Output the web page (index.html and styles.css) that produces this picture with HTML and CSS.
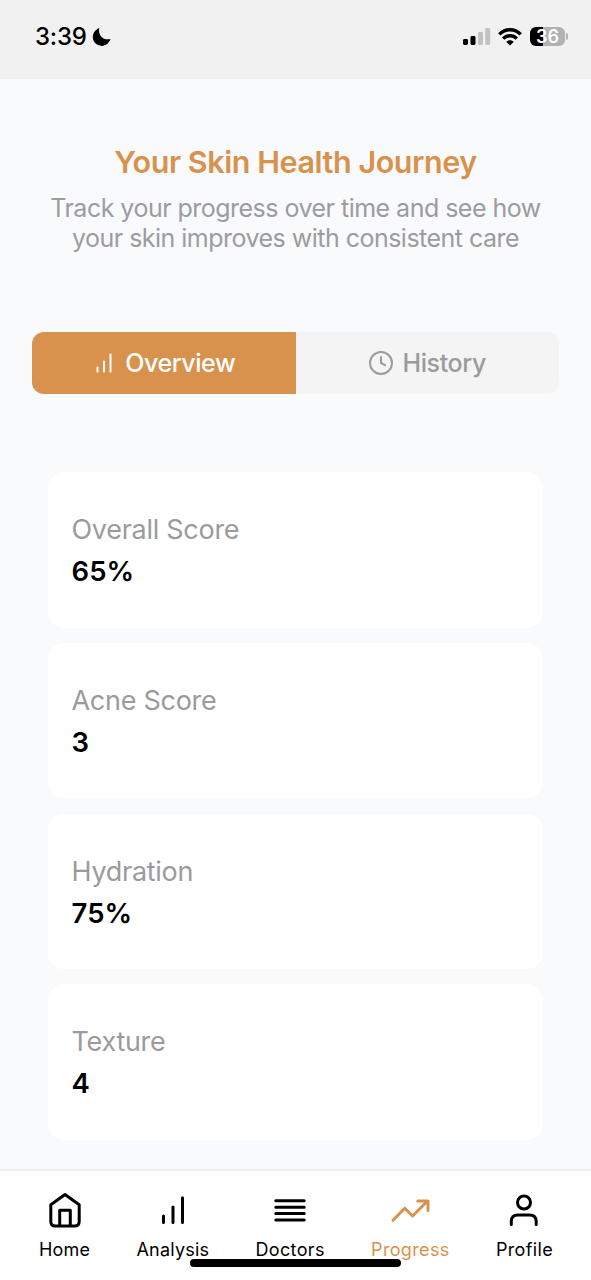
FILE: index.html
```html
<!DOCTYPE html>
<html lang="en">
<head>
<meta charset="utf-8">
<title>Your Skin Health Journey</title>
<link rel="stylesheet" href="styles.css">
</head>
<body>
<div class="app">
  <header class="status">
    <div class="clock"><span class="time">3:39</span>
      <svg width="20" height="20" viewBox="0 0 20 20"><path d="M7.300.9C5.700 6.700 10 13.800 18.600 12.100C16.900 16.300 13.800 18.900 9.800 18.900C4.700 18.900.8 14.900.8 10.100C.8 5.900 3.500 2.300 7.300.9Z" fill="#000"/></svg>
    </div>
    <div class="indicators">
      <svg class="signal" width="28" height="18" viewBox="0 0 28 18"><rect x="0" y="11" width="5" height="6" rx="1.400"/><rect x="7.500" y="8" width="5" height="9" rx="1.400"/><g fill="#c2c2c2"><rect x="15" y="4" width="5" height="13" rx="1.400"/><rect x="22.200" y="0" width="5" height="17" rx="1.400"/></g></svg>
      <svg class="wifi" width="24" height="18" viewBox="0 0 24 18"><g fill="none" stroke="#000" stroke-width="3.400"><path d="M1.300 6.400C7.300.2 16.700.2 22.700 6.400"/><path d="M5.200 10.600C9 6.800 15 6.800 18.800 10.600"/></g><path d="M8.200 13.700C10.300 11.600 13.700 11.600 15.800 13.700L12 17.500Z"/></svg>
      <div class="battery"><span class="level">36</span></div>
      <span class="cap"></span>
    </div>
  </header>
  <main class="content">
    <h1 class="title">Your Skin Health Journey</h1>
    <p class="intro">Track your progress over time and see how<br>your skin improves with consistent care</p>
    <div class="tabs">
      <button class="tab active"><svg width="18" height="22" viewBox="0 0 18 22" fill="none" stroke="currentColor" stroke-width="2" stroke-linecap="round"><path d="M2.500 15.500V19.500M9 9.500V19.500M15.500 2.500V19.500"/></svg><span>Overview</span></button>
      <button class="tab"><svg width="26" height="26" viewBox="0 0 26 26" fill="none" stroke="currentColor" stroke-width="2" stroke-linecap="round" stroke-linejoin="round"><circle cx="13" cy="13" r="11"/><path d="M13 7V13L17 15.200"/></svg><span>History</span></button>
    </div>
    <section class="cards">
      <article class="card"><div class="label">Overall Score</div><div class="value">65%</div></article>
      <article class="card"><div class="label">Acne Score</div><div class="value">3</div></article>
      <article class="card"><div class="label">Hydration</div><div class="value">75%</div></article>
      <article class="card"><div class="label">Texture</div><div class="value">4</div></article>
    </section>
  </main>
  <nav class="nav">
    <a class="item home"><svg viewBox="0 0 40 40"><path d="M20 4.500 34.200 14.700V31.500Q34.200 36 29.700 36H10.300Q5.800 36 5.800 31.500V14.700ZM14.700 36V20.300H25.300V36"/></svg><span>Home</span></a>
    <a class="item analysis"><svg viewBox="0 0 40 40"><path d="M10.500 26V32.500M20 17V32.500M29.500 7.700V32.500"/></svg><span>Analysis</span></a>
    <a class="item doctors"><svg viewBox="0 0 40 40"><path d="M5.800 10.800H34.200M5.800 17.200H34.200M5.800 23.500H34.200M5.800 29.900H34.200"/></svg><span>Doctors</span></a>
    <a class="item progress"><svg viewBox="0 0 40 40"><path d="M3 30.300 14.800 18.200 22.600 26 37.500 11M27.800 11H38V20.500"/></svg><span>Progress</span></a>
    <a class="item profile"><svg viewBox="0 0 40 40"><circle cx="20" cy="12.500" r="6.500"/><path d="M7.300 34.500V31.500Q7.300 24.900 13.900 24.900H25.500Q32.200 24.900 32.200 31.500V34.500"/></svg><span>Profile</span></a>
    <div class="home-bar"></div>
  </nav>
</div>
</body>
</html>
```
FILE: styles.css
```css
* { box-sizing: border-box; }
body { margin: 0; font-family: Inter, "Liberation Sans", sans-serif; color: #000; }
.app { display: flex; flex-direction: column; width: 591px; height: 1280px; background: #f9fafc; overflow: hidden; }
svg { display: block; flex-shrink: 0; }
.status { display: flex; justify-content: space-between; height: 79px; padding: 26px 23px 0 35px; background: #f1f1f1; }
.clock, .indicators { display: flex; height: 22px; align-items: center; }
.indicators { height: 21px; }
.clock { gap: 5px; }
.time { font-size: 24px; font-weight: 500; line-height: 22px; letter-spacing: -0.2px; }
.wifi { margin-left: 7px; }
.battery { display: flex; align-items: center; justify-content: center; width: 35px; height: 19px; margin-left: 8px; border-radius: 6px; background: linear-gradient(90deg, #000 37%, #b2b2b2 37%); color: #fff; }
.level { font-size: 18px; font-weight: 600; line-height: 19px; }
.cap { width: 2px; height: 7px; margin-left: 1px; border-radius: 0 3px 3px 0; background: #b2b2b2; }
.content { flex: 1; padding: 64px 32px 0; }
.title { margin: 0; color: #d8924e; font-size: 30.5px; font-weight: 600; line-height: 38px; text-align: center; white-space: nowrap; letter-spacing: -0.43px; }
.intro { margin: 12px 0 0; color: #9c9c9e; font-size: 25px; line-height: 30px; text-align: center; white-space: nowrap; letter-spacing: -0.52px; }
.tabs { display: grid; grid-template-columns: 1fr 1fr; height: 62px; margin-top: 78.6px; border-radius: 12px; overflow: hidden; background: #f4f4f4; }
.tab { display: flex; align-items: center; justify-content: center; gap: 8px; padding: 0; border: 0; background: none; color: #9b9b9b; font: 500 25px/30px Inter, "Liberation Sans", sans-serif; letter-spacing: -0.35px; }
.tab.active { gap: 12px; padding-left: 3px; background: #d8924e; color: #fff; letter-spacing: -0.45px; }
.cards { display: grid; gap: 15.2px; padding: 78.4px 16px 0; }
.card { height: 155.6px; padding: 40px 24px 0; border-radius: 16px; background: #fff; }
.label { margin-left: -0.5px; color: #9b9b9b; font-size: 27px; line-height: 36px; letter-spacing: -0.28px; }
.value { margin: 5px 0 0 -0.5px; font-size: 27.5px; font-weight: 600; line-height: 36px; letter-spacing: 0.1px; }
.nav { position: relative; display: flex; justify-content: space-between; height: 111px; padding: 19px 38px 0 39px; border-top: 2px solid #efeff0; background: #fff; }
.item { display: flex; flex-direction: column; align-items: center; gap: 8px; font-size: 18px; line-height: 24px; letter-spacing: 0.35px; }
.item.home, .item.analysis { letter-spacing: 0.2px; }
.item svg { width: 40px; height: 40px; fill: none; stroke: currentColor; stroke-width: 3; stroke-linecap: round; stroke-linejoin: round; }
.item.progress { color: #d8924e; }
.home-bar { position: absolute; left: 190px; bottom: 13px; width: 211px; height: 8px; border-radius: 4px; background: #000; }
```
